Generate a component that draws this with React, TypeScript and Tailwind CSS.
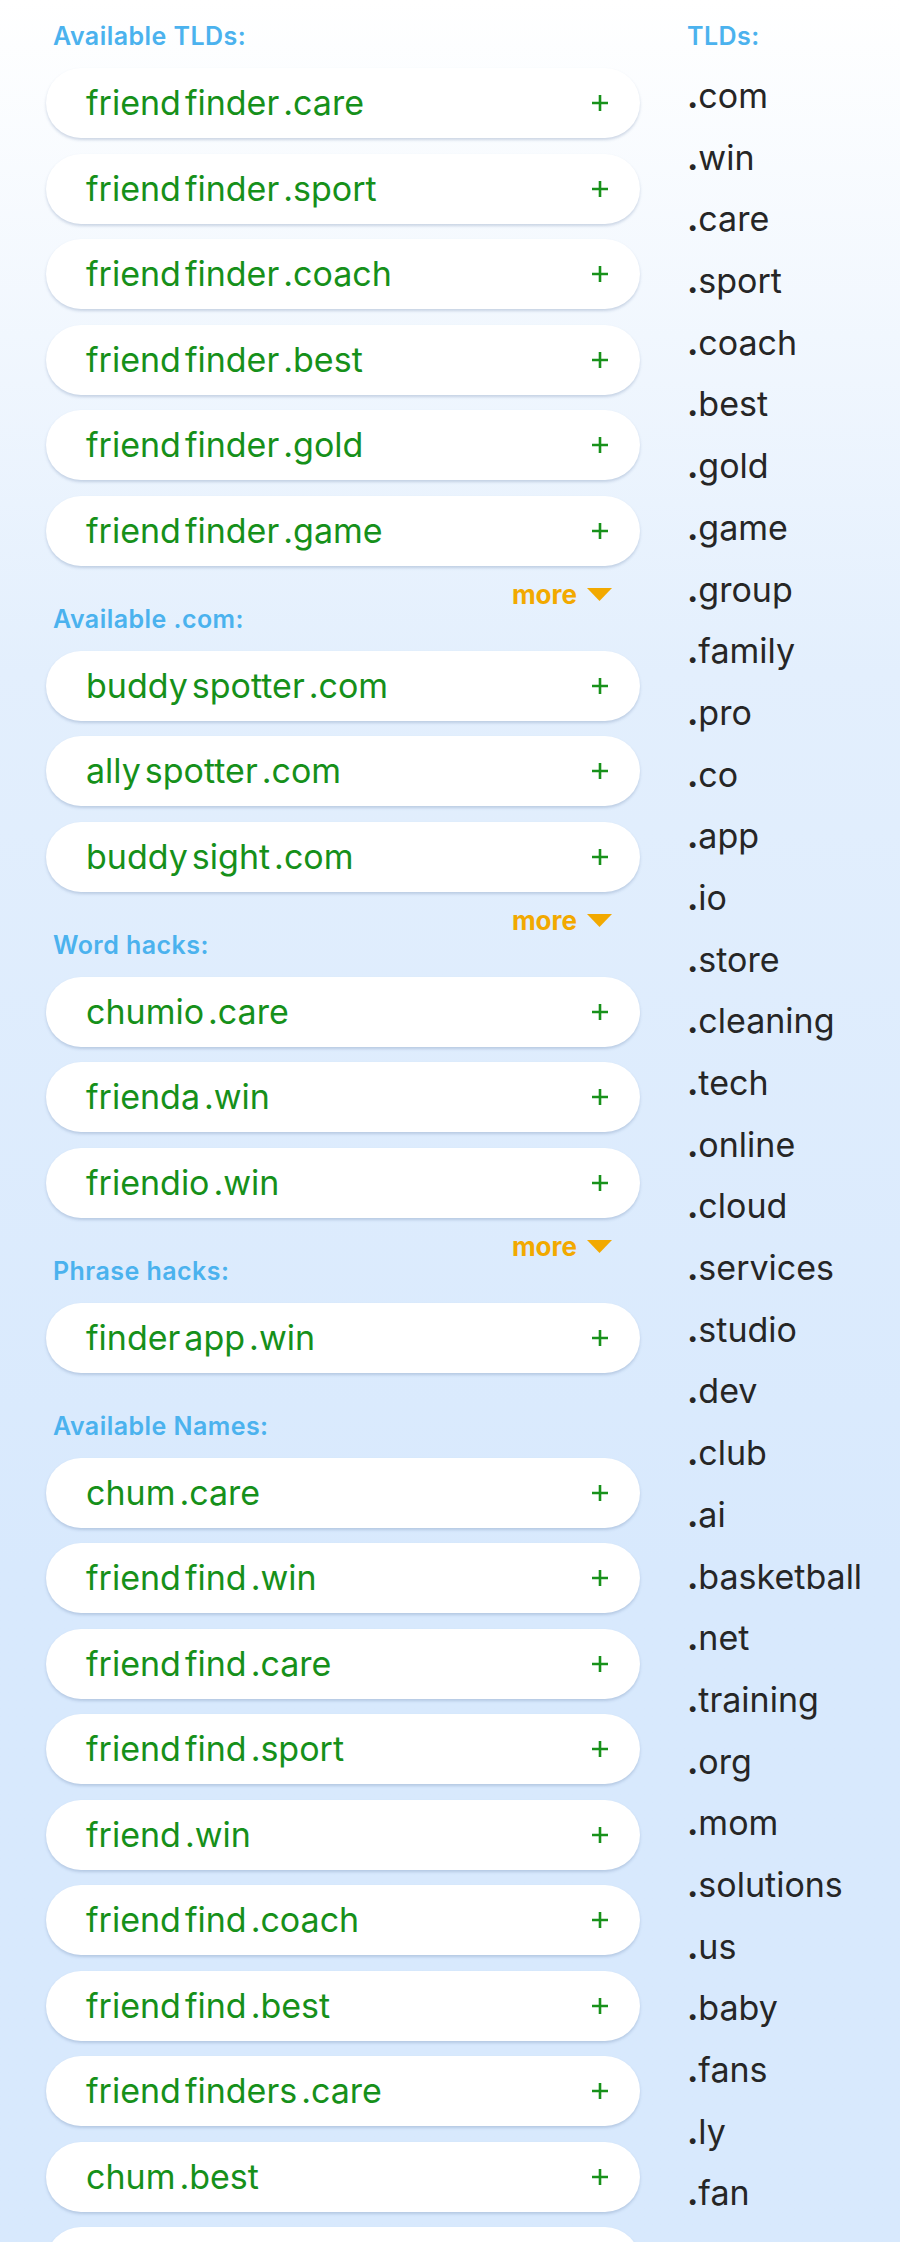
import React from 'react';

type Section = {
  label: string;
  more?: boolean;
  names: string[][];
};

const sections: Section[] = [
  {
    label: 'Available TLDs:',
    more: true,
    names: [
      ['friend', 'finder', '.care'],
      ['friend', 'finder', '.sport'],
      ['friend', 'finder', '.coach'],
      ['friend', 'finder', '.best'],
      ['friend', 'finder', '.gold'],
      ['friend', 'finder', '.game'],
    ],
  },
  {
    label: 'Available .com:',
    more: true,
    names: [
      ['buddy', 'spotter', '.com'],
      ['ally', 'spotter', '.com'],
      ['buddy', 'sight', '.com'],
    ],
  },
  {
    label: 'Word hacks:',
    more: true,
    names: [
      ['chumio', '.care'],
      ['frienda', '.win'],
      ['friendio', '.win'],
    ],
  },
  {
    label: 'Phrase hacks:',
    names: [['finder', 'app', '.win']],
  },
  {
    label: 'Available Names:',
    names: [
      ['chum', '.care'],
      ['friend', 'find', '.win'],
      ['friend', 'find', '.care'],
      ['friend', 'find', '.sport'],
      ['friend', '.win'],
      ['friend', 'find', '.coach'],
      ['friend', 'find', '.best'],
      ['friend', 'finders', '.care'],
      ['chum', '.best'],
      // next row only peeks in at the bottom edge
      [],
    ],
  },
];

const tlds = [
  'com', 'win', 'care', 'sport', 'coach', 'best', 'gold', 'game', 'group', 'family',
  'pro', 'co', 'app', 'io', 'store', 'cleaning', 'tech', 'online', 'cloud', 'services',
  'studio', 'dev', 'club', 'ai', 'basketball', 'net', 'training', 'org', 'mom',
  'solutions', 'us', 'baby', 'fans', 'ly', 'fan',
];

const font = { fontFamily: 'Inter, "Noto Sans", sans-serif' };

const Plus = () => (
  <svg width="18" height="18" viewBox="0 0 18 18" className="shrink-0">
    <path d="M9 1v16M1 9h16" stroke="#17911a" strokeWidth="2.6" />
  </svg>
);

// "more" of the section above sits on the right of the next header
const Header: React.FC<{ label: string; more?: boolean }> = ({ label, more }) => (
  <div className="flex h-[68px] items-start justify-between">
    <span className="ml-[7px] pt-[24px] text-[25px] font-semibold leading-[25px] tracking-[0.45px] text-[#4bb2ee]">
      {label}
    </span>
    {more && (
      <button className="mr-[28px] -mt-px flex items-center gap-[10px] text-[26px] font-bold leading-[26px] text-[#f2a900]">
        more
        <svg width="25" height="13" viewBox="0 0 25 13">
          <polygon points="0,0 25,0 12.5,13" fill="#f2a900" />
        </svg>
      </button>
    )}
  </div>
);

const Pill: React.FC<{ parts: string[] }> = ({ parts }) => (
  <div className="flex h-[70px] shrink-0 items-center justify-between rounded-full bg-white pl-[40px] pr-[31px] shadow-[0_2px_3px_rgba(90,120,160,0.28)]">
    <span className="flex text-[34px] leading-[34px] text-[#16901a]">
      {parts.map((p, i) => (
        <span key={i} className={i > 0 ? 'ml-[4px]' : ''}>
          {p}
        </span>
      ))}
    </span>
    {parts.length > 0 && <Plus />}
  </div>
);

export default function App() {
  return (
    <div
      style={font}
      className="flex h-[2242px] w-full overflow-hidden bg-linear-to-b from-white via-[#e3effd] via-30% to-[#d8e9fd] to-70%"
    >
      <div className="ml-[46px] flex w-[594px] flex-col gap-[17px]">
        {sections.map((s, i) => (
          <div key={s.label}>
            <Header label={s.label} more={i > 0 && sections[i - 1].more} />
            <div className="flex flex-col gap-[15.5px]">
              {s.names.map((n, j) => (
                <Pill key={j} parts={n} />
              ))}
            </div>
          </div>
        ))}
      </div>

      <div className="ml-[47px] flex flex-col">
        <div className="h-[65px]">
          <span className="inline-block pt-[24px] text-[25px] font-semibold leading-[25px] tracking-[0.45px] text-[#4bb2ee]">
            TLDs:
          </span>
        </div>
        {tlds.map(t => (
          <div key={t} className="h-[61.7px] text-[34px] leading-[61.7px] text-[#262626]">
            <span className="font-bold">.</span>
            {t}
          </div>
        ))}
      </div>
    </div>
  );
}
